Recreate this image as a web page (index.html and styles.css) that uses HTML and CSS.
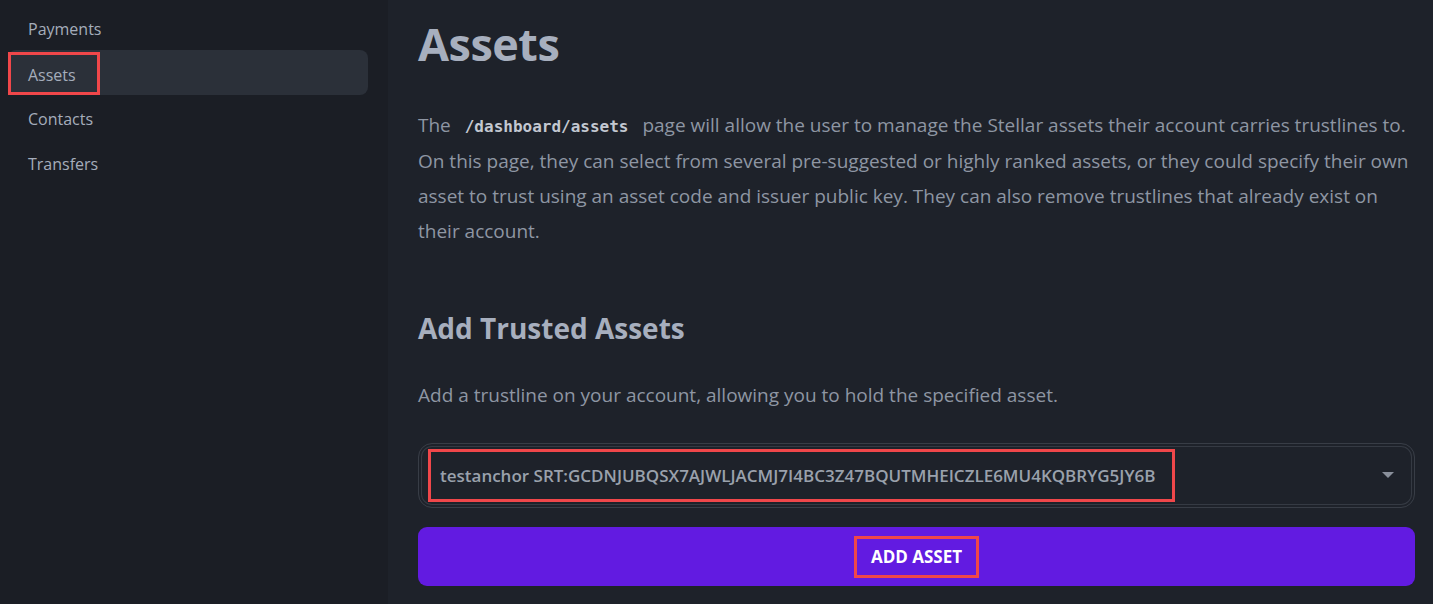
FILE: index.html
```html
<!DOCTYPE html>
<html lang="en">
<head>
<meta charset="utf-8">
<title>Assets</title>
<link rel="stylesheet" href="styles.css">
</head>
<body>
<div class="layout">
  <aside class="sidebar">
    <nav class="nav">
      <a class="nav-item">Payments</a>
      <a class="nav-item active"><span class="mark mark-nav">Assets</span></a>
      <a class="nav-item">Contacts</a>
      <a class="nav-item">Transfers</a>
    </nav>
  </aside>
  <main class="main">
    <h1 class="title">Assets</h1>
    <p class="text">The <code class="code">/dashboard/assets</code> page will allow the user to manage the Stellar assets their account carries trustlines to. On this page, they can select from several pre-suggested or highly ranked assets, or they could specify their own asset to trust using an asset code and issuer public key. They can also remove trustlines that already exist on their account.</p>
    <h2 class="subtitle">Add Trusted Assets</h2>
    <p class="text text-short">Add a trustline on your account, allowing you to hold the specified asset.</p>
    <div class="select">
      <span class="mark mark-select">testanchor SRT:GCDNJUBQSX7AJWLJACMJ7I4BC3Z47BQUTMHEICZLE6MU4KQBRYG5JY6B</span>
      <svg class="caret" width="12" height="7" viewBox="0 0 12 7"><path d="M0 0h12L6 6z" fill="#8a909b"/></svg>
    </div>
    <button class="btn"><span class="mark mark-btn">ADD ASSET</span></button>
  </main>
</div>
</body>
</html>
```
FILE: styles.css
```css
* { box-sizing: border-box; }
html, body { margin: 0; padding: 0; }
body {
  background: #1e222a;
  font-family: "Open Sans", "Noto Sans", sans-serif;
  color: #8e96a3;
  height: 604px;
  overflow: hidden;
}
.layout { display: flex; height: 604px; }
.sidebar {
  width: 388px;
  flex: none;
  background: #1b1e25;
}
.nav {
  display: flex;
  flex-direction: column;
  padding: 5px 20px 0 8px;
}
.nav-item {
  display: flex;
  align-items: center;
  height: 45px;
  padding-left: 20px;
  padding-top: 2px;
  font-size: 16px;
  color: #a5adbb;
  border-radius: 8px;
}
.nav-item.active { background: #2b3039; padding-left: 0; padding-top: 0; }
.mark { border: 3px solid #f0474a; }
.mark-nav {
  display: flex;
  align-items: center;
  height: 43px;
  width: 92px;
  padding-left: 17px;
  padding-top: 2px;
  margin-top: 2px;
}
.main {
  flex: 1;
  padding: 14px 18px 0 30px;
}
.title {
  margin: 0;
  font-size: 45px;
  font-weight: 700;
  line-height: 60px;
  color: #a7afbe;
  letter-spacing: -0.5px;
}
.text {
  margin: 34px 0 0;
  font-size: 19px;
  line-height: 35px;
  color: #8e96a3;
}
.code {
  font-family: "DejaVu Sans Mono", "Liberation Mono", monospace;
  font-weight: 700;
  font-size: 16px;
  color: #c3c8d1;
  margin: 0 9px;
}
.subtitle {
  margin: 59px 0 0;
  font-size: 28px;
  font-weight: 700;
  line-height: 40px;
  color: #a7afbe;
}
.text-short { margin-top: 30px; }
.select {
  margin-top: 30px;
  height: 65px;
  border: 1px solid #383d46;
  border-radius: 14px;
  padding: 4px 20px 4px 9px;
  display: flex;
  align-items: center;
  justify-content: space-between;
  box-shadow: inset 0 0 0 2px #1e222a, inset 0 0 0 3px #353a43;
}
.mark-select {
  display: flex;
  align-items: center;
  height: 53px;
  padding: 0 17px 0 9px;
  font-size: 17px;
  font-weight: 600;
  color: #9aa1ac;
}
.caret { flex: none; }
.btn {
  display: flex;
  justify-content: center;
  align-items: center;
  width: 100%;
  margin-top: 19px;
  height: 59px;
  border: none;
  border-radius: 9px;
  background: #621be1;
  font-family: inherit;
  font-size: 17px;
  font-weight: 700;
  color: #ffffff;
}
.mark-btn {
  display: flex;
  align-items: center;
  height: 42px;
  padding: 0 14px;
}
```
